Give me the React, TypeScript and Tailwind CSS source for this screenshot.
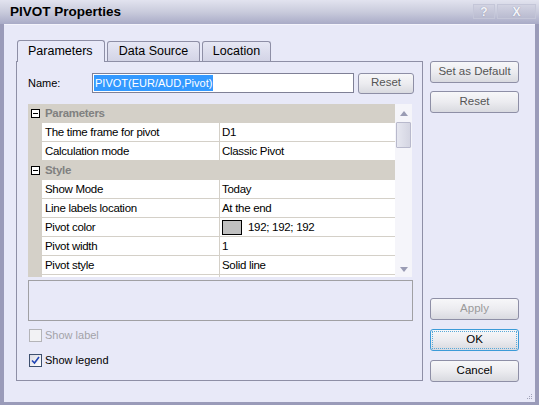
import React from "react";

type Row = { cat?: string; name?: string; value?: string; swatch?: string };

const rows: Row[] = [
    { cat: "Parameters" },
    { name: "The time frame for pivot", value: "D1" },
    { name: "Calculation mode", value: "Classic Pivot" },
    { cat: "Style" },
    { name: "Show Mode", value: "Today" },
    { name: "Line labels location", value: "At the end" },
    { name: "Pivot color", value: "192; 192; 192", swatch: "#c0c0c0" },
    { name: "Pivot width", value: "1" },
    { name: "Pivot style", value: "Solid line" },
    { name: "", value: "", swatch: "#ff0000" },
];

function Button({ label, disabled, muted, focused }: { label: string; disabled?: boolean; muted?: boolean; focused?: boolean }) {
    const color = disabled ? "text-[#9a9a9a]" : muted ? "text-[#555]" : "text-black";
    return (
        <div
            className={`h-[22px] w-[89px] rounded-[3px] border ${focused ? "border-[#3c9bd8]" : "border-[#8e8fa6]"} bg-gradient-to-b from-[#f7f7f9] via-[#ececf0] to-[#d9dae0] flex items-center justify-center ${color} text-[11.5px] p-[1px]`}
        >
            {focused ? (
                <div className="w-full h-full border border-dotted border-[#5aa9d8] flex items-center justify-center">{label}</div>
            ) : (
                label
            )}
        </div>
    );
}

function Checkbox({ label, checked, disabled }: { label: string; checked?: boolean; disabled?: boolean }) {
    return (
        <div className="flex items-center gap-[3px] h-[14px]">
            <div
                className={`w-[13px] h-[13px] border flex items-center justify-center ${disabled ? "border-[#b4b4b8] bg-[#f2f2f4]" : "border-[#3d4f6e] bg-gradient-to-br from-[#dcdce4] to-white"}`}
            >
                {checked && (
                    <svg width="9" height="9" viewBox="0 0 9 9">
                        <path d="M1 4.5 L3.5 7 L8 1" fill="none" stroke="#2145b5" strokeWidth="1.6" />
                    </svg>
                )}
            </div>
            <span className={disabled ? "text-[#a3a3a8]" : "text-black"}>{label}</span>
        </div>
    );
}

function Grid() {
    return (
        <div className="h-[173px] w-[384px] flex overflow-hidden bg-white text-[11.5px] tracking-[-0.3px]">
            <div className="w-[367px] flex flex-col">
                {rows.map((r, i) =>
                    r.cat ? (
                        <div key={i} className="h-[19px] shrink-0 bg-[#d4d0c8] flex items-center">
                            <div className="w-[14px] flex justify-center">
                                <div className="w-[9px] h-[9px] border border-black bg-white flex items-center justify-center">
                                    <div className="w-[5px] h-[1px] bg-black" />
                                </div>
                            </div>
                            <span className="pl-[3px] font-bold text-[#808080] pt-[1px]">{r.cat}</span>
                        </div>
                    ) : (
                        <div key={i} className="h-[19px] shrink-0 flex">
                            <div className="w-[14px] bg-[#d4d0c8]" />
                            <div className="flex-1 flex border-b border-[#d4d0c8]">
                                <div className="w-[178px] border-r border-[#d4d0c8] pl-[3px] pt-[1px] flex items-center">{r.name}</div>
                                <div className="flex-1 pl-[2px] pt-[1px] flex items-center gap-[6px]">
                                    {r.swatch && (
                                        <div className="w-[20px] h-[15px] border border-black" style={{ backgroundColor: r.swatch }} />
                                    )}
                                    <span>{r.value}</span>
                                </div>
                            </div>
                        </div>
                    )
                )}
            </div>
            <div className="w-[17px] bg-[#f5f5fa] flex flex-col items-center">
                <div className="h-[18px] flex items-center justify-center">
                    <svg width="8" height="5" viewBox="0 0 8 5">
                        <path d="M0 5 L4 0 L8 5 Z" fill="#9a9cb4" />
                    </svg>
                </div>
                <div className="w-[15px] h-[26px] rounded-[1px] border border-[#b8b9cc] bg-gradient-to-r from-[#e6e7f0] to-[#d4d5e2]" />
                <div className="flex-1" />
                <div className="h-[16px] flex items-center justify-center">
                    <svg width="8" height="5" viewBox="0 0 8 5">
                        <path d="M0 0 L4 5 L8 0 Z" fill="#9a9cb4" />
                    </svg>
                </div>
            </div>
        </div>
    );
}

export default function App() {
    return (
        <div className="w-[539px] h-[405px] bg-[#9a9bb9] flex flex-col overflow-hidden font-['Liberation_Sans',Arial,sans-serif] text-[11px] text-black">
            {/* title bar */}
            <div className="h-[24px] shrink-0 bg-gradient-to-b from-[#e2e3ef] via-[#c9cbdc] to-[#a9abc7] flex items-center pl-[10px] pr-[3px]">
                <span className="font-bold text-[13.5px] pt-[1px]">PIVOT Properties</span>
                <div className="flex-1" />
                <div className="flex gap-[2px] self-start mt-[4px]">
                    <div className="w-[22px] h-[15px] bg-gradient-to-b from-[#d2d3e2] to-[#b9bbd0] border border-[#c4c6d8] flex items-center justify-center font-bold text-[12px] text-[#f4f5fa] [text-shadow:0_0_1px_#7d7f99]">
                        ?
                    </div>
                    <div className="w-[39px] h-[15px] bg-gradient-to-b from-[#d2d3e2] to-[#b9bbd0] border border-[#c4c6d8] flex items-center justify-center font-bold text-[12px] text-[#f4f5fa] [text-shadow:0_0_1px_#7d7f99]">
                        X
                    </div>
                </div>
            </div>

            {/* client area */}
            <div className="flex-1 mx-[4px] mb-[3px] bg-[#e8e9f8] border-t border-[#f4f4fc] flex gap-[7px] pl-[12px] pt-[15px] relative">
                <div className="w-[407px] flex flex-col">
                    {/* tabs */}
                    <div className="h-[21px] flex items-end gap-[2px] pl-[1px] text-[12.5px] relative z-10">
                        <div className="h-[22px] -mb-[1px] w-[88px] rounded-t-[3px] border border-b-0 border-[#8e8fa6] bg-[#e8e9f8] flex items-center pl-[10px]">
                            Parameters
                        </div>
                        <div className="h-[20px] w-[93px] rounded-t-[3px] border border-b-0 border-[#8e8fa6] bg-gradient-to-b from-[#e6e7f4] to-[#d3d4e6] flex items-center justify-center">
                            Data Source
                        </div>
                        <div className="h-[20px] w-[69px] rounded-t-[3px] border border-b-0 border-[#8e8fa6] bg-gradient-to-b from-[#e6e7f4] to-[#d3d4e6] flex items-center justify-center">
                            Location
                        </div>
                    </div>
                    {/* panel */}
                    <div className="h-[320px] border border-[#8e8fa6] flex flex-col pl-[11px] pt-[11px]">
                        <div className="flex items-center h-[20px]">
                            <div className="w-[64px]">Name:</div>
                            <div className="w-[262px] h-[20px] border border-[#7f8096] bg-white flex items-center pl-[1px]">
                                <span className="bg-[#3399ff] text-white px-[1px] leading-[16px]">PIVOT(EUR/AUD,Pivot)</span>
                            </div>
                            <div className="ml-[4px] w-[56px] h-[21px] rounded-[3px] border border-[#8e8fa6] bg-gradient-to-b from-[#f7f7f9] via-[#ececf0] to-[#d9dae0] flex items-center justify-center text-[#555] text-[11.5px]">
                                Reset
                            </div>
                        </div>
                        <div className="mt-[11px]">
                            <Grid />
                        </div>
                        <div className="mt-[3px] w-[385px] h-[41px] border border-[#a0a0a4]" />
                        <div className="mt-[7px] flex flex-col gap-[11px] pl-[1px]">
                            <Checkbox label="Show label" disabled />
                            <Checkbox label="Show legend" checked />
                        </div>
                    </div>
                </div>

                {/* right buttons */}
                <div className="w-[89px] flex flex-col pt-[21px] pb-[20px]">
                    <div className="flex flex-col gap-[8px]">
                        <Button label="Set as Default" muted />
                        <Button label="Reset" muted />
                    </div>
                    <div className="flex-1" />
                    <div className="flex flex-col gap-[9px]">
                        <Button label="Apply" disabled />
                        <Button label="OK" focused />
                        <Button label="Cancel" />
                    </div>
                </div>

                {/* resize grip */}
                <svg className="absolute right-[2px] bottom-[2px]" width="6" height="6" viewBox="0 0 6 6">
                    <rect x="4" y="0" width="1" height="1" fill="#a0a2b8" />
                    <rect x="2" y="2" width="1" height="1" fill="#a0a2b8" />
                    <rect x="4" y="2" width="1" height="1" fill="#a0a2b8" />
                    <rect x="0" y="4" width="1" height="1" fill="#a0a2b8" />
                    <rect x="2" y="4" width="1" height="1" fill="#a0a2b8" />
                    <rect x="4" y="4" width="1" height="1" fill="#a0a2b8" />
                </svg>
            </div>
        </div>
    );
}
